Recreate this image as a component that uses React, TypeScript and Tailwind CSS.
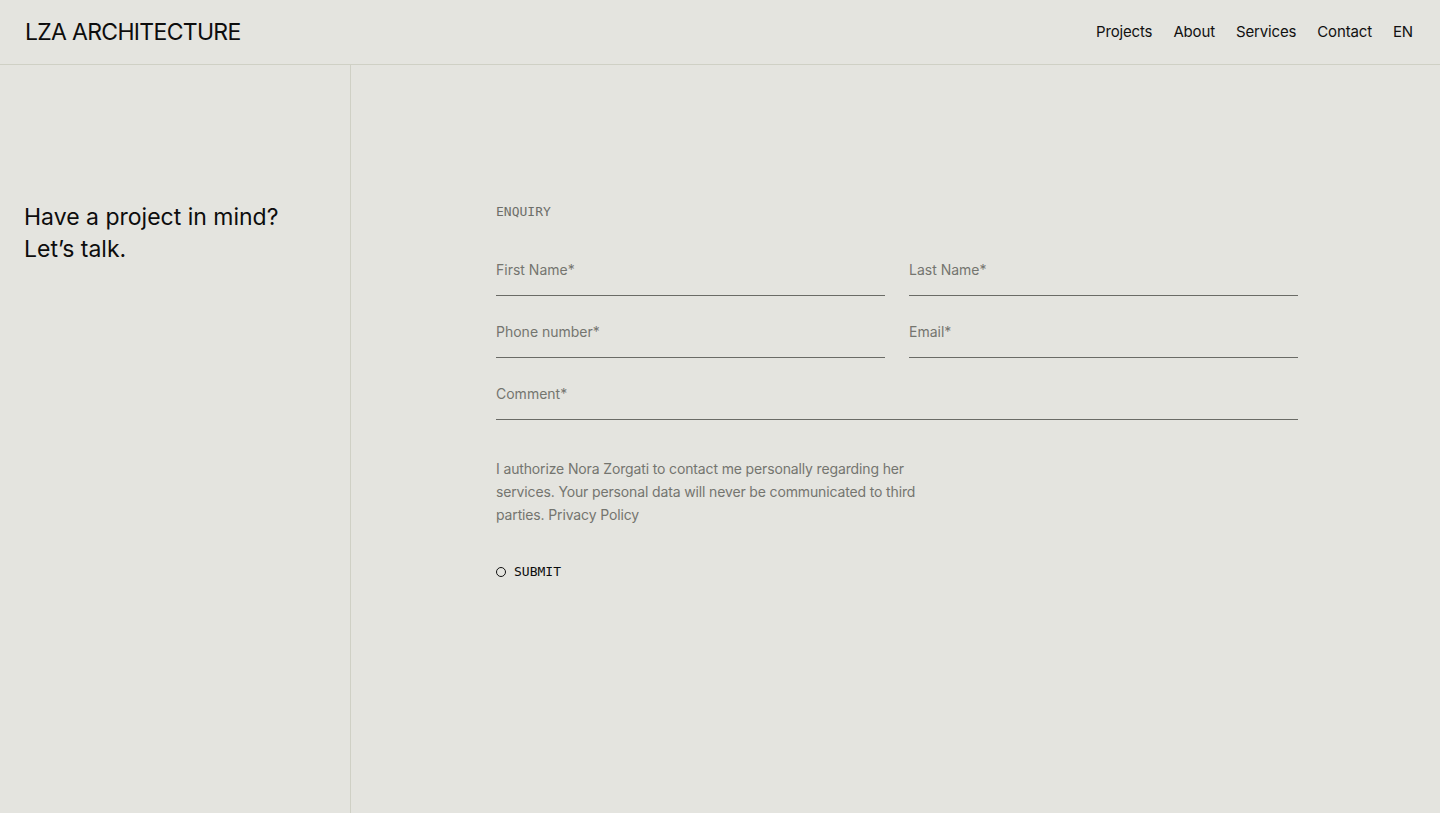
import React from 'react';

const navItems = ['Projects', 'About', 'Services', 'Contact', 'EN'];

const Field: React.FC<{ label: string; className?: string }> = ({ label, className }) => (
    <label className={`flex flex-col border-b border-[#6a6b66] pb-[15px] ${className ?? ''}`}>
        <input
            placeholder={label}
            className="bg-transparent text-[14px] leading-5 text-[#1a1a1a] placeholder:text-[#74756f] outline-none"
        />
    </label>
);

const App: React.FC = () => {
    return (
        <div className="min-h-screen bg-[#e4e4df] text-[#111] font-['Inter','Liberation_Sans',sans-serif] flex flex-col">
            {/* Header */}
            <header className="h-[65px] flex items-center justify-between pl-[25px] pr-[27px] border-b border-[#cfd0c5]">
                <a className="text-[23px] tracking-[-0.03em] leading-none font-normal text-[#0d0d0d]">LZA ARCHITECTURE</a>
                <nav className="flex items-center gap-[21px] text-[15px] tracking-[-0.01em]">
                    {navItems.map((item) => (
                        <a key={item} className="text-[#111] cursor-pointer">{item}</a>
                    ))}
                </nav>
            </header>

            <main className="flex flex-1 min-h-[748px]">
                {/* Left column */}
                <aside className="w-[351px] shrink-0 border-r border-[#cfd0c5] pl-[24px] pt-[136px]">
                    <h1 className="text-[23px] leading-8 text-[#0d0d0d]">
                        Have a project in mind?
                        <br />
                        Let’s talk.
                    </h1>
                </aside>

                {/* Form */}
                <section className="flex-1 pl-[145px] pt-[139px]">
                    <form className="w-[802px]" onSubmit={(e) => e.preventDefault()}>
                        <p className="font-['DejaVu_Sans_Mono','Liberation_Mono',monospace] text-[13px] leading-4 text-[#6d6e69]">
                            ENQUIRY
                        </p>

                        <div className="mt-[40px] flex flex-col gap-[26px]">
                            <div className="grid grid-cols-2 gap-6">
                                <Field label="First Name*" />
                                <Field label="Last Name*" />
                            </div>
                            <div className="grid grid-cols-2 gap-6">
                                <Field label="Phone number*" />
                                <Field label="Email*" />
                            </div>
                            <Field label="Comment*" />
                        </div>

                        <p className="mt-[37px] max-w-[426px] text-[14px] leading-[23px] tracking-[-0.01em] text-[#74756f]">
                            I authorize Nora Zorgati to contact me personally regarding her services. Your personal data will never be communicated to third parties. Privacy Policy
                        </p>

                        <button type="submit" className="mt-[37px] flex items-center gap-[8px] text-[13px] leading-[18px] text-[#0d0d0d] font-['DejaVu_Sans_Mono','Liberation_Mono',monospace]">
                            <span className="w-[10px] h-[10px] rounded-full border-[1.5px] border-[#111]" />
                            SUBMIT
                        </button>
                    </form>
                </section>
            </main>
        </div>
    );
};

export default App;
